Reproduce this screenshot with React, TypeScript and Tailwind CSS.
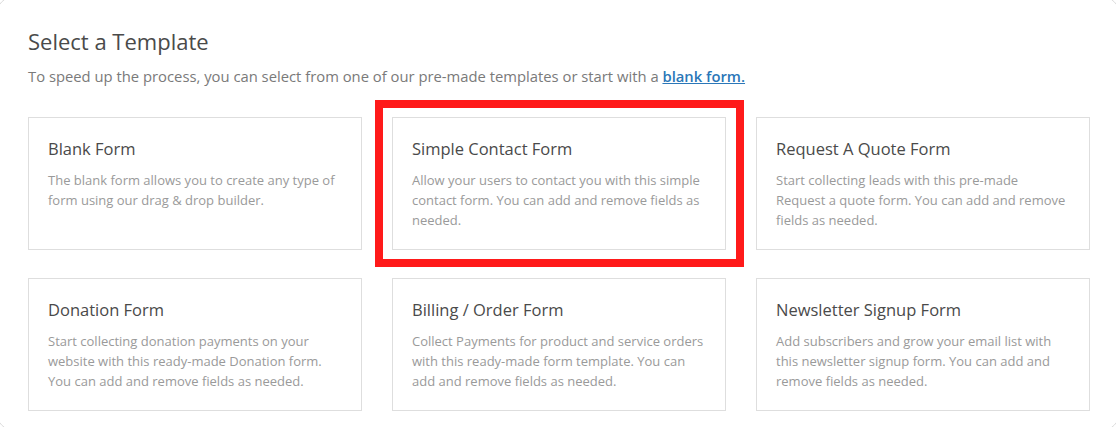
import React from "react";

const cards = [
  {
    title: "Blank Form",
    desc: "The blank form allows you to create any type of form using our drag & drop builder.",
  },
  {
    title: "Simple Contact Form",
    desc: "Allow your users to contact you with this simple contact form. You can add and remove fields as needed.",
    highlight: true,
  },
  {
    title: "Request A Quote Form",
    desc: "Start collecting leads with this pre-made Request a quote form. You can add and remove fields as needed.",
  },
  {
    title: "Donation Form",
    desc: "Start collecting donation payments on your website with this ready-made Donation form. You can add and remove fields as needed.",
  },
  {
    title: "Billing / Order Form",
    desc: "Collect Payments for product and service orders with this ready-made form template. You can add and remove fields as needed.",
  },
  {
    title: "Newsletter Signup Form",
    desc: "Add subscribers and grow your email list with this newsletter signup form. You can add and remove fields as needed.",
  },
];

export default function App() {
  return (
    <div className="w-[1116px] h-[427px] overflow-hidden bg-white">
      <div
        className="-m-[5px] w-[1126px] h-[437px] rounded-[22px] border border-[#dcdcdc] bg-white pl-[32px] pt-[30px]"
        style={{ fontFamily: '"Open Sans", "Noto Sans", sans-serif' }}
      >
        <h1 className="text-[22px] leading-[30px] text-[#4a4a4a] font-normal">Select a Template</h1>
        <p className="mt-[10px] text-[14.8px] leading-[20px] text-[#7a7a7a]">
          To speed up the process, you can select from one of our pre-made templates or start with a{" "}
          <a href="#" className="text-[#2b77b8] underline font-semibold">
            blank form.
          </a>
        </p>
        <div className="mt-[31px] grid grid-cols-[334px_334px_334px] gap-x-[30px] gap-y-[28px]">
          {cards.map((c) => (
            <div key={c.title} className="relative">
              <div className="h-[133px] border border-[#dedede] bg-white pl-[19px] pr-[21px] pt-[19px]">
                <h2 className="text-[16.5px] leading-[24px] text-[#4a4a4a] font-normal">{c.title}</h2>
                <p className="mt-[9px] text-[13px] leading-[20px] text-[#9a9a9a]">{c.desc}</p>
              </div>
              {c.highlight && (
                <div className="pointer-events-none absolute -top-[17px] -bottom-[17px] -left-[17px] -right-[18px] border-[8px] border-[#ff1a1a]" />
              )}
            </div>
          ))}
        </div>
      </div>
    </div>
  );
}
